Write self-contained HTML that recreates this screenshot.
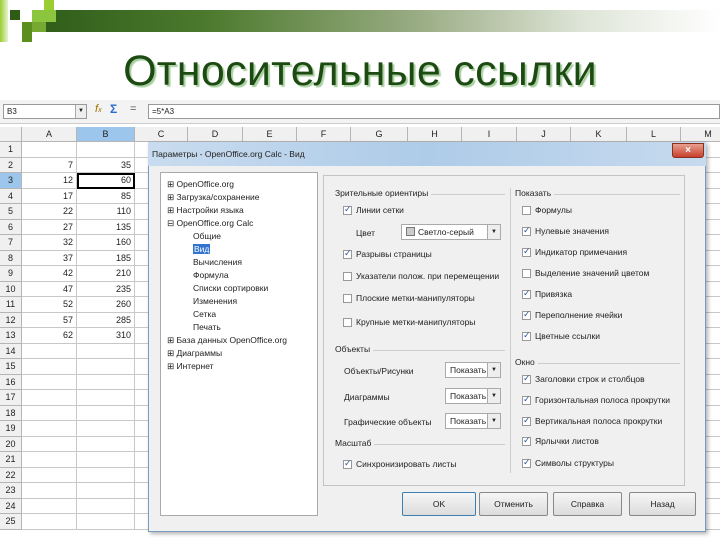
<!DOCTYPE html>
<html><head><meta charset="utf-8"><style>
*{margin:0;padding:0;box-sizing:border-box}
body{width:720px;height:540px;overflow:hidden;background:#fff;position:relative;font-family:"Liberation Sans","DejaVu Sans",sans-serif;font-size:9px;color:#222}
.a{position:absolute}
.bar{left:40px;top:10px;width:680px;height:22px;background:linear-gradient(90deg,#2f5e1a 0%,#4d7a2e 25%,#98ab82 55%,#dfe5d8 80%,#fff 100%)}
.title{left:0;width:720px;top:46px;text-align:center;font-size:43px;color:#1d4a12;text-shadow:2px 2px 1px #a8cfa0;letter-spacing:0.3px;line-height:50px}
.cell{position:absolute;border-right:1px solid #c8c8c8;border-bottom:1px solid #c8c8c8;height:15.5px;font-size:9px;line-height:15px}
.hd{background:#f0f0f0;text-align:center;border-color:#b5b5b5}
.cb{position:absolute;width:9px;height:9px;border:1px solid #999;background:#fff}
.cb.on::after{content:"✓";position:absolute;left:0;top:-3px;font-size:9px;color:#2a5aa0}
.t{position:absolute;white-space:nowrap;font-size:8.5px}
.sec{position:absolute;font-size:8.5px;white-space:nowrap;background:#f0f0f0;padding-right:3px}
.ln{position:absolute;height:1px;background:#ccc}
.btn{position:absolute;top:492px;height:24px;border:1px solid #888;border-radius:2px;background:linear-gradient(#f6f6f6,#dcdcdc);text-align:center;line-height:22px;font-size:8.5px}
.sel{position:absolute;height:16px;border:1px solid #aaa;background:#fff;font-size:8.5px;line-height:14px;padding-left:4px}
.sel b{position:absolute;right:0;top:0;width:13px;height:14px;border-left:1px solid #aaa;background:#eee;font-size:6px;text-align:center;font-weight:normal}
.tr{position:absolute;font-size:8.5px;white-space:nowrap}
</style></head><body>
<div class="a bar"></div>
<div class="a" style="left:0;top:0;width:8px;height:42px;background:linear-gradient(90deg,#9acd32,#e8f5d0)"></div>
<div class="a" style="left:10px;top:10px;width:10px;height:10px;background:#2e5c14"></div>
<div class="a" style="left:32px;top:10px;width:24px;height:12px;background:#8cc63f"></div>
<div class="a" style="left:44px;top:0;width:10px;height:10px;background:#9acd32"></div>
<div class="a" style="left:22px;top:22px;width:10px;height:20px;background:#5a8f1e"></div>
<div class="a" style="left:32px;top:22px;width:14px;height:10px;background:#76a832"></div>
<div class="a title">Относительные ссылки</div>

<div class="a" style="left:0;top:100px;width:720px;height:24px;background:#f3f3f3;border-bottom:1px solid #ccc"></div>
<div class="a" style="left:3px;top:104px;width:84px;height:15px;border:1px solid #999;background:#fff;font-size:8px;padding-left:3px;line-height:13px">B3<span style="position:absolute;right:0;top:0;width:11px;height:13px;border-left:1px solid #aaa;background:#eee;font-size:6px;text-align:center">▼</span></div>
<div class="a" style="left:95px;top:103px;font-size:11px;font-style:italic;color:#a07000">f<span style="font-size:7px">x</span></div>
<div class="a" style="left:110px;top:102px;font-size:12px;color:#2a6ad0;font-weight:bold">Σ</div>
<div class="a" style="left:130px;top:103px;font-size:11px;color:#555">=</div>
<div class="a" style="left:148px;top:104px;width:572px;height:15px;border:1px solid #999;background:#fff;font-size:8px;padding-left:3px;line-height:13px">=5*A3</div>

<div id="g"></div>
<div class="a" style="left:148px;top:142px;width:558px;height:390px;background:#f0f0f0;border:1px solid #7a9bbf;box-shadow:2px 2px 4px rgba(0,0,0,.3)"></div>
<div class="a" style="left:148px;top:142px;width:558px;height:24px;background:linear-gradient(90deg,#c9dcef,#aecbe8 50%,#c6daee)"></div>
<div class="a" style="left:152px;top:149px;font-size:8.5px">Параметры - OpenOffice.org Calc - Вид</div>
<div class="a" style="left:672px;top:143px;width:32px;height:15px;background:linear-gradient(#e8a090,#c8402a);border:1px solid #8a3020;border-radius:0 0 3px 3px;color:#fff;text-align:center;font-size:10px;line-height:13px;font-weight:bold">×</div>

<div class="a" style="left:160px;top:172px;width:158px;height:344px;background:#fff;border:1px solid #aaa"></div>
<div class="tr" style="left:167px;top:179px">⊞ OpenOffice.org</div>
<div class="tr" style="left:167px;top:192px">⊞ Загрузка/сохранение</div>
<div class="tr" style="left:167px;top:205px">⊞ Настройки языка</div>
<div class="tr" style="left:167px;top:218px">⊟ OpenOffice.org Calc</div>
<div class="tr" style="left:193px;top:231px">Общие</div>
<div class="tr" style="left:193px;top:244px;background:#3374d0;color:#fff;padding:0 1px">Вид</div>
<div class="tr" style="left:193px;top:257px">Вычисления</div>
<div class="tr" style="left:193px;top:270px">Формула</div>
<div class="tr" style="left:193px;top:283px">Списки сортировки</div>
<div class="tr" style="left:193px;top:296px">Изменения</div>
<div class="tr" style="left:193px;top:309px">Сетка</div>
<div class="tr" style="left:193px;top:322px">Печать</div>
<div class="tr" style="left:167px;top:335px">⊞ База данных OpenOffice.org</div>
<div class="tr" style="left:167px;top:348px">⊞ Диаграммы</div>
<div class="tr" style="left:167px;top:361px">⊞ Интернет</div>

<div class="a" style="left:323px;top:175px;width:362px;height:311px;border:1px solid #c4c4c4"></div>
<div class="a" style="left:510px;top:188px;width:1px;height:285px;background:#ccc"></div>
<div class="ln" style="left:335px;top:194px;width:170px"></div><div class="sec" style="left:335px;top:188px">Зрительные ориентиры</div>
<div class="ln" style="left:515px;top:194px;width:165px"></div><div class="sec" style="left:515px;top:188px">Показать</div>
<div class="ln" style="left:335px;top:350px;width:170px"></div><div class="sec" style="left:335px;top:344px">Объекты</div>
<div class="ln" style="left:515px;top:363px;width:165px"></div><div class="sec" style="left:515px;top:357px">Окно</div>
<div class="ln" style="left:335px;top:444px;width:170px"></div><div class="sec" style="left:335px;top:438px">Масштаб</div>

<div class="cb on" style="left:343px;top:206px"></div><div class="t" style="left:356px;top:205px">Линии сетки</div>
<div class="t" style="left:356px;top:228px">Цвет</div>
<div class="sel" style="left:401px;top:224px;width:100px"><span style="display:inline-block;width:9px;height:9px;background:#ccc;border:1px solid #777;vertical-align:-1px;margin-right:3px"></span>Светло-серый<b>▼</b></div>
<div class="cb on" style="left:343px;top:250px"></div><div class="t" style="left:356px;top:249px">Разрывы страницы</div>
<div class="cb" style="left:343px;top:272px"></div><div class="t" style="left:356px;top:271px">Указатели полож. при перемещении</div>
<div class="cb" style="left:343px;top:294px"></div><div class="t" style="left:356px;top:293px">Плоские метки-манипуляторы</div>
<div class="cb" style="left:343px;top:318px"></div><div class="t" style="left:356px;top:317px">Крупные метки-манипуляторы</div>
<div class="t" style="left:344px;top:366px">Объекты/Рисунки</div><div class="sel" style="left:445px;top:362px;width:56px">Показать<b>▼</b></div>
<div class="t" style="left:344px;top:392px">Диаграммы</div><div class="sel" style="left:445px;top:388px;width:56px">Показать<b>▼</b></div>
<div class="t" style="left:344px;top:417px">Графические объекты</div><div class="sel" style="left:445px;top:413px;width:56px">Показать<b>▼</b></div>
<div class="cb on" style="left:343px;top:460px"></div><div class="t" style="left:356px;top:459px">Синхронизировать листы</div>

<div class="cb" style="left:522px;top:206px"></div><div class="t" style="left:535px;top:205px">Формулы</div>
<div class="cb on" style="left:522px;top:227px"></div><div class="t" style="left:535px;top:226px">Нулевые значения</div>
<div class="cb on" style="left:522px;top:248px"></div><div class="t" style="left:535px;top:247px">Индикатор примечания</div>
<div class="cb" style="left:522px;top:269px"></div><div class="t" style="left:535px;top:268px">Выделение значений цветом</div>
<div class="cb on" style="left:522px;top:290px"></div><div class="t" style="left:535px;top:289px">Привязка</div>
<div class="cb on" style="left:522px;top:311px"></div><div class="t" style="left:535px;top:310px">Переполнение ячейки</div>
<div class="cb on" style="left:522px;top:332px"></div><div class="t" style="left:535px;top:331px">Цветные ссылки</div>
<div class="cb on" style="left:522px;top:375px"></div><div class="t" style="left:535px;top:374px">Заголовки строк и столбцов</div>
<div class="cb on" style="left:522px;top:396px"></div><div class="t" style="left:535px;top:395px">Горизонтальная полоса прокрутки</div>
<div class="cb on" style="left:522px;top:417px"></div><div class="t" style="left:535px;top:416px">Вертикальная полоса прокрутки</div>
<div class="cb on" style="left:522px;top:437px"></div><div class="t" style="left:535px;top:436px">Ярлычки листов</div>
<div class="cb on" style="left:522px;top:459px"></div><div class="t" style="left:535px;top:458px">Символы структуры</div>

<div class="btn" style="left:402px;width:74px;border-color:#3c7fb1">OK</div>
<div class="btn" style="left:479px;width:69px">Отменить</div>
<div class="btn" style="left:553px;width:69px">Справка</div>
<div class="btn" style="left:629px;width:67px">Назад</div>

<script>
var g=document.getElementById('g'),h='';
var cols=[22,77,135,188,243,297,351,408,462,517,571,627,681,736],L='ABCDEFGHIJKLM';
h+='<div class="cell hd" style="left:0;top:127px;width:22px;height:15px"></div>';
for(var i=0;i<13;i++){h+='<div class="cell hd" style="left:'+cols[i]+'px;top:127px;width:'+(cols[i+1]-cols[i])+'px;height:15px;'+(i==1?'background:#9cc6ec;':'')+'">'+L[i]+'</div>';}
for(var r=1;r<=25;r++){var y=142+(r-1)*15.5;
h+='<div class="cell hd" style="left:0;top:'+y+'px;width:22px;'+(r==3?'background:#9cc6ec;':'')+'">'+r+'</div>';
var a='',b='';if(r>=2&&r<=13){a=7+(r-2)*5;b=a*5;}
h+='<div class="cell" style="left:22px;top:'+y+'px;width:55px;text-align:right;padding-right:3px">'+a+'</div>';
h+='<div class="cell" style="left:77px;top:'+y+'px;width:58px;text-align:right;padding-right:3px;'+(r==3?'outline:2px solid #000;outline-offset:-2px;':'')+'">'+b+'</div>';
for(var c=2;c<13;c++)h+='<div class="cell" style="left:'+cols[c]+'px;top:'+y+'px;width:'+(cols[c+1]-cols[c])+'px"></div>';}
g.innerHTML=h;
</script>
</body></html>
